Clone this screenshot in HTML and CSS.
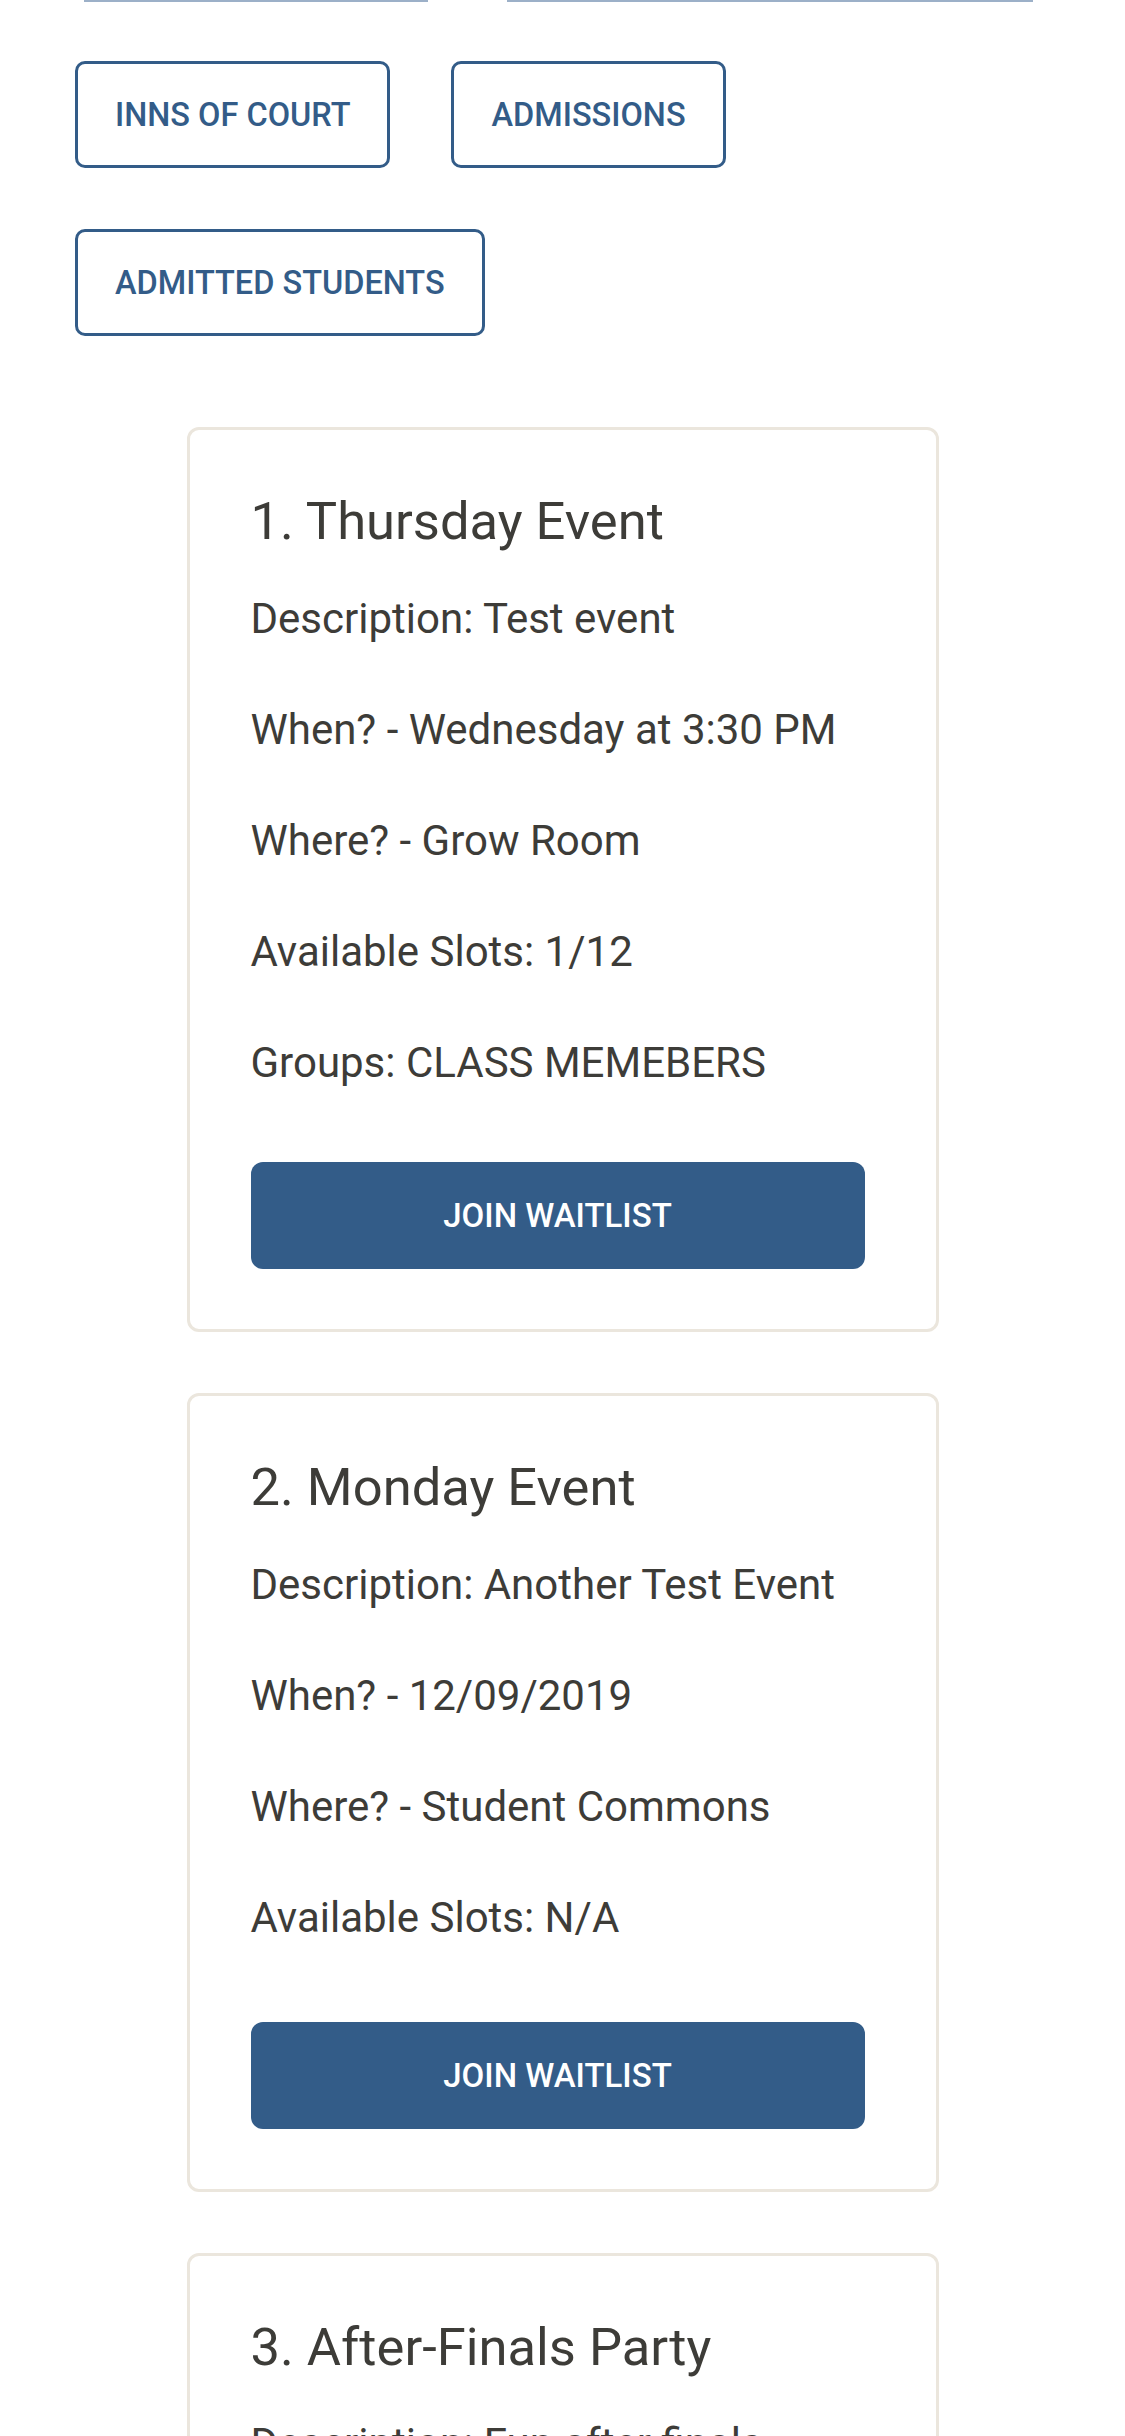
FILE: index.html
```html
<!DOCTYPE html>
<html lang="en">
<head>
<meta charset="utf-8">
<title>Events</title>
<link rel="stylesheet" href="styles.css">
</head>
<body>
<div class="tabs">
  <span class="tab-line tab-line-a"></span>
  <span class="tab-line tab-line-b"></span>
</div>
<nav class="nav">
  <a class="nav-btn" href="#">Inns of Court</a>
  <a class="nav-btn" href="#">Admissions</a>
  <a class="nav-btn" href="#">Admitted Students</a>
</nav>
<main class="events">
  <section class="card">
    <h2 class="card-title">1. Thursday Event</h2>
    <p class="card-line">Description: Test event</p>
    <p class="card-line">When? - Wednesday at 3:30 PM</p>
    <p class="card-line">Where? - Grow Room</p>
    <p class="card-line">Available Slots: 1/12</p>
    <p class="card-line">Groups: CLASS MEMEBERS</p>
    <button class="card-btn" type="button">Join Waitlist</button>
  </section>
  <section class="card">
    <h2 class="card-title">2. Monday Event</h2>
    <p class="card-line">Description: Another Test Event</p>
    <p class="card-line">When? - 12/09/2019</p>
    <p class="card-line">Where? - Student Commons</p>
    <p class="card-line">Available Slots: N/A</p>
    <button class="card-btn card-btn-spaced" type="button">Join Waitlist</button>
  </section>
  <section class="card">
    <h2 class="card-title">3. After-Finals Party</h2>
    <p class="card-line">Description: Fun after finals</p>
    <p class="card-line">When? - Friday</p>
  </section>
</main>
</body>
</html>
```
FILE: styles.css
```css
* { box-sizing: border-box; }

html, body {
  margin: 0;
  padding: 0;
  background: #ffffff;
}

body {
  font-family: Roboto, "Liberation Sans", Arial, sans-serif;
  color: #3d3c38;
  overflow: hidden;
}

.tabs {
  display: flex;
  height: 2px;
  padding-left: 84px;
  gap: 79px;
}

.tab-line {
  display: block;
  height: 2px;
  background: #9cb0c8;
}

.tab-line-a { width: 344px; }
.tab-line-b { width: 526px; }

.nav {
  display: flex;
  flex-wrap: wrap;
  gap: 61px 61px;
  padding: 59px 75px 0 75px;
}

.nav-btn {
  display: flex;
  align-items: center;
  height: 107px;
  padding: 0 37px;
  border: 3px solid #335c88;
  border-radius: 10px;
  color: #335c88;
  font-size: 32.5px;
  font-weight: 500;
  text-transform: uppercase;
  text-decoration: none;
}

.events {
  padding-top: 91px;
}

.card {
  width: 752px;
  margin: 0 auto 61px auto;
  border: 3px solid #ebe6dd;
  border-radius: 12px;
  padding: 59px 71px 60px 61px;
}

.card-title {
  margin: 0 0 33px 0;
  font-size: 52.5px;
  line-height: 64.8px;
  font-weight: 400;
  color: #3d3c38;
}

.card-line {
  margin: 0 0 48px 0;
  font-size: 42px;
  line-height: 63px;
}

.card-btn {
  display: block;
  width: 100%;
  height: 107px;
  margin-top: 68px;
  border: 0;
  border-radius: 12px;
  background: #335c88;
  color: #ffffff;
  font-family: inherit;
  font-size: 33px;
  font-weight: 500;
  text-transform: uppercase;
}

.card-btn-spaced {
  margin-top: 73px;
}
```
